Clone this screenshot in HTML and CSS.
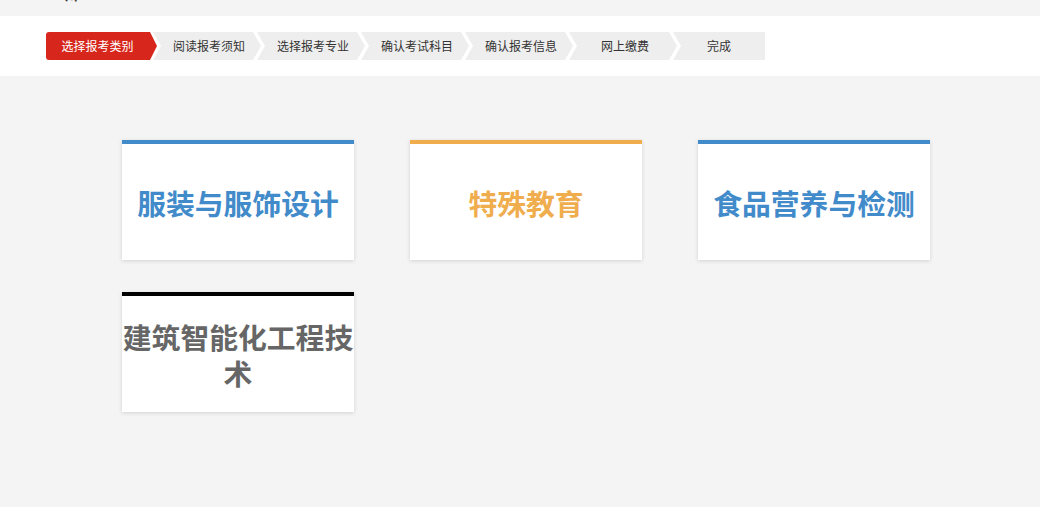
FILE: index.html
```html
<!DOCTYPE html>
<html lang="zh-CN">
<head>
<meta charset="utf-8">
<title>选择报考类别</title>
<link rel="stylesheet" href="styles.css">
</head>
<body>
<div class="topstrip"><span class="topfrag">川</span></div>
<div class="header">
  <ul class="steps">
    <li class="step active">选择报考类别</li>
    <li class="step">阅读报考须知</li>
    <li class="step">选择报考专业</li>
    <li class="step">确认考试科目</li>
    <li class="step">确认报考信息</li>
    <li class="step">网上缴费</li>
    <li class="step last">完成</li>
  </ul>
</div>
<div class="main">
  <div class="grid">
    <div class="card blue"><span>服装与服饰设计</span></div>
    <div class="card orange"><span>特殊教育</span></div>
    <div class="card blue"><span>食品营养与检测</span></div>
    <div class="card dark"><span>建筑智能化工程技术</span></div>
  </div>
</div>
</body>
</html>
```

FILE: styles.css
```css
html, body {
  margin: 0;
  padding: 0;
  background: #f4f4f4;
  font-family: "Noto Sans CJK SC", "Microsoft YaHei", sans-serif;
}

.topstrip {
  height: 16px;
  overflow: hidden;
  padding-left: 65px;
}

.topfrag {
  display: block;
  font-size: 13px;
  line-height: 13px;
  margin-top: -12px;
  color: #333;
  font-weight: bold;
}

.header {
  background: #fff;
  height: 60px;
  padding: 16px 0 0 46px;
  box-sizing: border-box;
}

.steps {
  list-style: none;
  margin: 0;
  padding: 0;
  display: flex;
}

.step {
  width: 108px;
  height: 28px;
  line-height: 28px;
  font-size: 12px;
  color: #333;
  text-align: center;
  background: #eeeeee;
  margin-left: -4px;
  padding-left: 4px;
  box-sizing: border-box;
  clip-path: polygon(0 0, calc(100% - 8px) 0, 100% 50%, calc(100% - 8px) 100%, 0 100%, 8px 50%);
}

.step.active {
  margin-left: 0;
  width: 111px;
  padding-left: 0;
  padding-right: 8px;
  background: #d7271c;
  color: #fff;
  border-radius: 3px 0 0 3px;
  clip-path: polygon(0 0, calc(100% - 7px) 0, 100% 50%, calc(100% - 7px) 100%, 0 100%);
  position: relative;
  z-index: 1;
}

.step.last {
  width: 92px;
  padding-left: 0;
  clip-path: polygon(0 0, 100% 0, 100% 100%, 0 100%, 8px 50%);
}

.main {
  padding: 64px 0 0 122px;
}

.grid {
  display: grid;
  grid-template-columns: repeat(3, 232px);
  column-gap: 56px;
  row-gap: 32px;
  padding-bottom: 8px;
}

.card {
  height: 120px;
  background: #fff;
  border-top: 4px solid #428bca;
  box-sizing: border-box;
  box-shadow: 0 1px 4px rgba(0, 0, 0, 0.14);
  display: flex;
  align-items: center;
  justify-content: center;
  text-align: center;
  font-size: 28.8px;
  line-height: 36px;
  font-weight: bold;
  color: #428bca;
}

.card span {
  display: block;
  margin-top: 2px;
}

.card.orange {
  border-top-color: #f0ad4e;
  color: #f0ad4e;
}

.card.dark {
  border-top-color: #000;
  color: #666;
}
```
